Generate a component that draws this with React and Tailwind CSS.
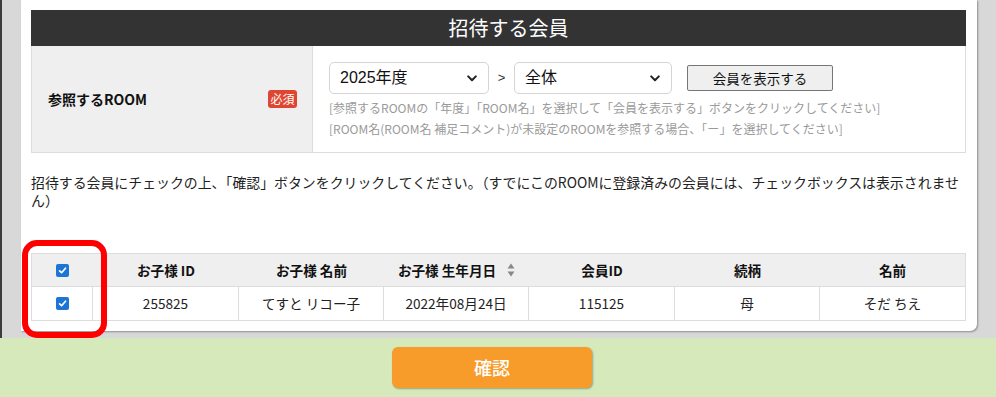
import React from "react";

const JP = { fontFamily: '"Noto Sans CJK JP", "Noto Sans", sans-serif' };
const SEL = { fontFamily: '"Liberation Sans", "Noto Sans CJK JP", sans-serif' };

function Chevron() {
  return (
    <svg width="10" height="7" viewBox="0 0 10 7" className="shrink-0">
      <path d="M1.2 1.4 L5 5.2 L8.8 1.4" fill="none" stroke="#222" strokeWidth="2" strokeLinecap="round" strokeLinejoin="round" />
    </svg>
  );
}

function Select({ value, width }) {
  return (
    <div
      className={`${width} h-[32px] border border-[#d4d4d4] rounded-[5px] bg-white flex items-center justify-between pl-[10px] pr-[11px] text-[16px] text-[#111]`}
      style={SEL}
    >
      <span>{value}</span>
      <Chevron />
    </div>
  );
}

function Check() {
  return (
    <span className="w-[13px] h-[13px] rounded-[2px] bg-[#1c74d4] inline-flex items-center justify-center">
      <svg width="9" height="9" viewBox="0 0 9 9">
        <path d="M1.6 4.8 L3.6 6.7 L7.5 2.2" fill="none" stroke="#fff" strokeWidth="1.7" strokeLinecap="round" strokeLinejoin="round" />
      </svg>
    </span>
  );
}

function SortIcon() {
  return (
    <svg width="8" height="14" viewBox="0 0 8 14" className="ml-[11px]">
      <path d="M4 0.5 L7.5 5.5 L0.5 5.5 Z" fill="#888" />
      <path d="M4 13.5 L7.5 8.5 L0.5 8.5 Z" fill="#888" />
    </svg>
  );
}

export default function App() {
  const cols = "grid grid-cols-[61px_146px_145px_145px_146px_145px_1fr]";
  return (
    <div className="relative w-[996px] h-[397px] overflow-hidden flex flex-col text-[#222]" style={JP}>
      <div className="h-[338px] bg-[#d8d8d8] border-l-2 border-[#3c3c3c] pl-[19px] pr-[19px] shrink-0">
        <div className="h-[331px] bg-white rounded-br-[7px] shadow-[1px_1px_2px_rgba(0,0,0,0.35)] pt-[10px] pl-[10px] pr-[11px]">
          {/* header */}
          <div className="h-[36px] bg-[#333333] flex items-center justify-center pl-[20px] text-white text-[20px]">
            招待する会員
          </div>
          {/* form row */}
          <div className="h-[107px] flex border border-t-0 border-[#dddddd]">
            <div className="w-[281px] bg-[#efefef] border-r border-[#dddddd] flex items-center justify-between pl-[16px] pr-[15px]">
              <span className="text-[14px] font-bold text-[#111]">参照するROOM</span>
              <span className="w-[29px] h-[18px] rounded-[3px] bg-[#df4631] text-white text-[12px] flex items-center justify-center leading-none">
                必須
              </span>
            </div>
            <div className="flex-1 pl-[16px] pt-[16px]">
              <div className="flex items-center">
                <Select value="2025年度" width="w-[160px]" />
                <span className="w-[25px] text-center text-[13px] text-[#333]" style={SEL}>&gt;</span>
                <Select value="全体" width="w-[158px]" />
                <button className="ml-[15px] w-[146px] h-[26px] bg-[#efefef] border border-[#767676] rounded-[2px] text-[13.5px] text-[#111] flex items-center justify-center">
                  会員を表示する
                </button>
              </div>
              <div className="mt-[3px] text-[12px] leading-[21px] text-[#9a9a9a]">
                <div>[参照するROOMの「年度」「ROOM名」を選択して「会員を表示する」ボタンをクリックしてください]</div>
                <div>[ROOM名(ROOM名 補足コメント)が未設定のROOMを参照する場合、「ー」を選択してください]</div>
              </div>
            </div>
          </div>
          {/* instruction */}
          <p className="mt-[20px] text-[13.9px] leading-[18px] text-[#222]">
            招待する会員にチェックの上、「確認」ボタンをクリックしてください。（すでにこのROOMに登録済みの会員には、チェックボックスは表示されません）
          </p>
          {/* table */}
          <div className="mt-[44px] border border-[#dddddd] text-[13.6px]">
            <div className={`${cols} h-[33px] bg-[#efefef] font-bold text-[#111] border-b border-[#dddddd]`}>
              <div className="flex items-center justify-center"><Check /></div>
              <div className="flex items-center justify-center">お子様 ID</div>
              <div className="flex items-center justify-center">お子様 名前</div>
              <div className="flex items-center justify-center">お子様 生年月日<SortIcon /></div>
              <div className="flex items-center justify-center">会員ID</div>
              <div className="flex items-center justify-center">続柄</div>
              <div className="flex items-center justify-center">名前</div>
            </div>
            <div className={`${cols} h-[33px] text-[#222]`}>
              <div className="flex items-center justify-center border-r border-[#dddddd]"><Check /></div>
              <div className="flex items-center justify-center border-r border-[#dddddd]">255825</div>
              <div className="flex items-center justify-center border-r border-[#dddddd]">てすと リコー子</div>
              <div className="flex items-center justify-center border-r border-[#dddddd]">2022年08月24日</div>
              <div className="flex items-center justify-center border-r border-[#dddddd]">115125</div>
              <div className="flex items-center justify-center border-r border-[#dddddd]">母</div>
              <div className="flex items-center justify-center">そだ ちえ</div>
            </div>
          </div>
        </div>
      </div>
      <div className="flex-1 bg-[#d6e9bb] flex justify-center pt-[9px] pr-[12px]">
        <button className="w-[200px] h-[41px] rounded-[6px] bg-[#f79b2b] text-white text-[18px] font-medium shadow-[1px_1px_2px_rgba(0,0,0,0.3)]">
          確認
        </button>
      </div>
      {/* annotation */}
      <div className="absolute left-[22px] top-[240px] w-[85px] h-[98px] border-[6px] border-[#ff0000] rounded-[15px]"></div>
    </div>
  );
}
